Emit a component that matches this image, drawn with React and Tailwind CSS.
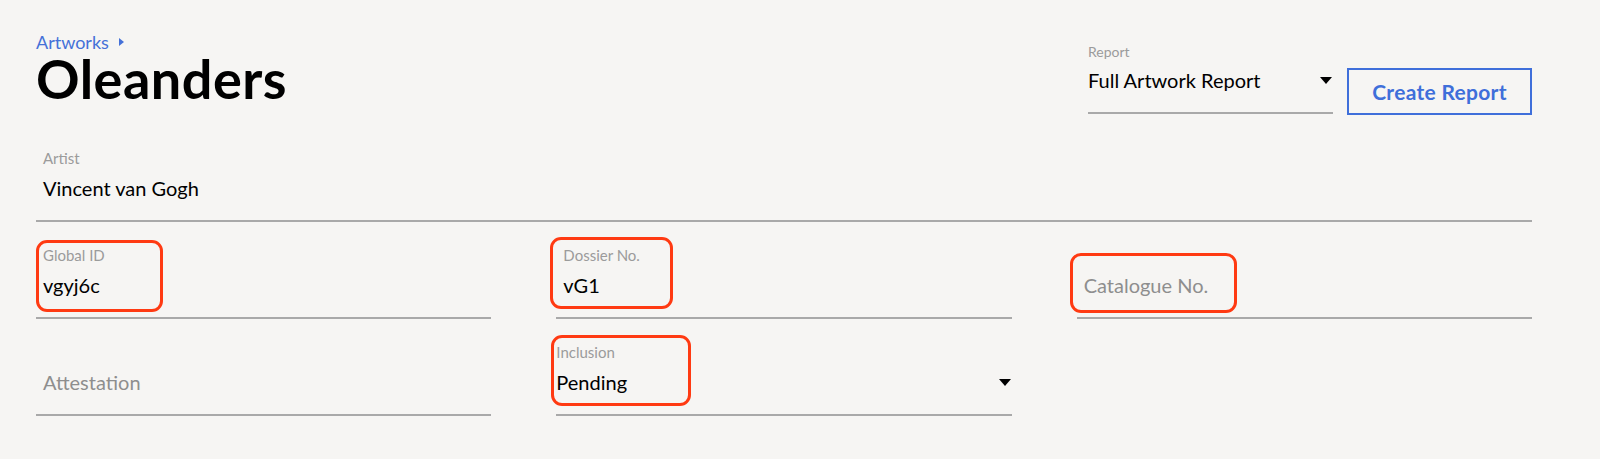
import React from "react";

function Caret({ className = "" }) {
  return (
    <svg className={className} width="12" height="7" viewBox="0 0 12 7" aria-hidden="true">
      <path d="M0 0 H12 L6 7 Z" fill="#000" />
    </svg>
  );
}

function Mark({ className }) {
  return (
    <div
      className={`pointer-events-none absolute rounded-[11px] border-[3px] border-[#ff3a12] ${className}`}
    />
  );
}

function TextField({ label, value, placeholder, mark, className = "" }) {
  return (
    <div className={`relative border-b-2 border-[#a9a9a9] px-[7px] pt-6 pb-5 ${className}`}>
      <div className="h-[18px] text-[15px] leading-[18px] text-[#9b9b9b]">{label}</div>
      <div className="mt-[9px] h-6 text-[20px] leading-6 text-black">
        {value ? value : <span className="text-[#8e8e8e]">{placeholder}</span>}
      </div>
      {mark}
    </div>
  );
}

function SelectField({ label, value, mark }) {
  return (
    <div className="relative border-b-2 border-[#a9a9a9] pt-6 pb-5">
      <div className="h-[18px] text-[15px] leading-[18px] text-[#9b9b9b]">{label}</div>
      <div className="mt-[9px] flex h-6 items-center justify-between text-[20px] leading-6 text-black">
        <span>{value}</span>
        <Caret className="mr-px" />
      </div>
      {mark}
    </div>
  );
}

export default function App() {
  return (
    <div className="min-h-[459px] w-full bg-[#f6f5f3] pl-[36px] pr-[68px] font-['Lato',sans-serif] text-black">
      <header className="flex h-[125px] items-start justify-between pt-[33px]">
        <div>
          <div className="flex h-[18px] items-center gap-[10px] text-[18px] leading-[18px] text-[#4571d8]">
            <span>Artworks</span>
            <svg width="5" height="8" viewBox="0 0 5 8" aria-hidden="true">
              <path d="M0 0 L5 4 L0 8 Z" fill="#4571d8" />
            </svg>
          </div>
          <h1 className="text-[54px] font-bold leading-[56px] tracking-[0.5px]">Oleanders</h1>
        </div>
        <div className="flex items-end gap-[14px] pt-[10px]">
          <div className="w-[245px] border-b-2 border-[#a9a9a9] pb-5">
            <div className="h-[17px] text-[14px] leading-[17px] text-[#9b9b9b]">Report</div>
            <div className="mt-2 flex h-6 items-center justify-between text-[20px] leading-6">
              <span>Full Artwork Report</span>
              <Caret className="mr-px" />
            </div>
          </div>
          <button className="mb-[-1px] h-[47px] w-[185px] border-2 border-[#3f6fda] text-[21px] font-bold tracking-[0.3px] text-[#3f6fda]">
            Create Report
          </button>
        </div>
      </header>

      <div className="grid grid-cols-3 gap-x-[65px]">
        <TextField className="col-span-3" label="Artist" value="Vincent van Gogh" />

        <TextField
          label="Global ID"
          value="vgyj6c"
          mark={<Mark className="left-0 top-[18px] h-[72px] w-[127px]" />}
        />
        <TextField
          label="Dossier No."
          value="vG1"
          mark={<Mark className="left-[-6px] top-[15px] h-[72px] w-[123px]" />}
        />
        <TextField
          label=""
          placeholder="Catalogue No."
          mark={<Mark className="left-[-7px] top-[31px] h-[60px] w-[167px]" />}
        />

        <TextField label="" placeholder="Attestation" />
        <SelectField
          label="Inclusion"
          value="Pending"
          mark={<Mark className="left-[-5px] top-[16px] h-[71px] w-[140px]" />}
        />
        <div />
      </div>
    </div>
  );
}
